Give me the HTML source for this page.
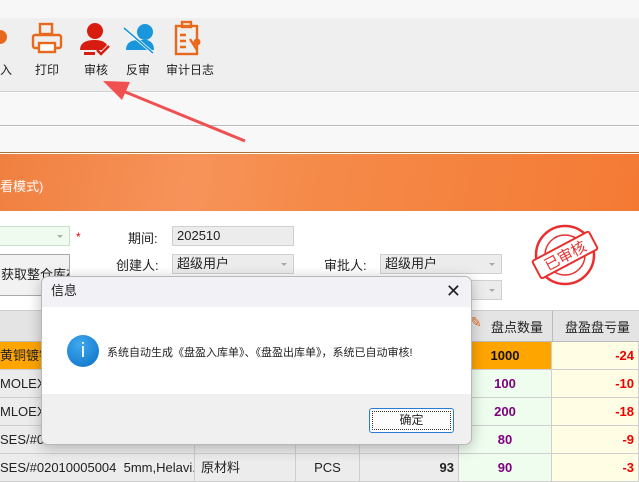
<!DOCTYPE html>
<html><head><meta charset="utf-8"><style>
*{margin:0;padding:0;box-sizing:border-box}
body{width:639px;height:478px;overflow:hidden;position:relative;background:#fff;font-family:"Liberation Sans","Noto Sans CJK SC",sans-serif;font-size:12px;color:#222}
.a{position:absolute}
.tb{left:0;top:18px;width:639px;height:74px;background:#efefef;border-bottom:1px solid #cfcfcf}
.lbl{font-size:12px;color:#222}
.cell{position:absolute;height:28px;line-height:28px;border-right:1px solid #cfcfcf;border-bottom:1px solid #cfcfcf;white-space:nowrap;overflow:hidden;font-size:13px}
.inp{position:absolute;height:20px;background:#ececec;border:1px solid #d0d0d0;line-height:18px;padding-left:4px;font-size:13px}
.arr{position:absolute;right:6px;top:8px;border:3px solid transparent;border-top-color:#aaa}
</style></head><body>
<div class="a" style="left:0;top:0;width:639px;height:18px;background:#f7f7f7"></div>
<div class="a tb"></div>
<svg class="a" style="left:0;top:20px" width="230" height="38">
<circle cx="0" cy="17" r="7" fill="#e8691c"/>
<g fill="none" stroke="#e8691c" stroke-width="2.4"><rect x="40" y="4" width="12" height="10"/><rect x="33" y="15" width="28" height="13" rx="2"/><rect x="39" y="23" width="16" height="9" fill="#fff"/></g>
<circle cx="95" cy="11" r="8" fill="#d71d10"/><path d="M80 30 q0-10 15-10 q9 0 12 5 l-5 5z" fill="#d71d10"/><rect x="84" y="32" width="11" height="3" fill="#d71d10"/><path d="M97 30l4 4 8-8" stroke="#d71d10" stroke-width="2.5" fill="none"/>
<circle cx="145" cy="12" r="8" fill="#1a96db"/><path d="M126 30q0-10 13-10h8q7 2 7 10z" fill="#1a96db"/><path d="M125 9l28 24" stroke="#fff" stroke-width="3"/><path d="M124 8l29 25" stroke="#1a96db" stroke-width="1.6"/>
<g fill="none" stroke="#e8691c" stroke-width="2.4"><rect x="176" y="6" width="21" height="28"/><rect x="182" y="2" width="9" height="5"/><path d="M180 15h6M180 21h6M180 27h6M190 19l7 11"/></g><circle cx="197" cy="22" r="3.5" fill="#e8691c"/>
</svg>
<div class="a lbl" style="left:-12px;top:61px">导入</div>
<div class="a lbl" style="left:35px;top:61px">打印</div>
<div class="a lbl" style="left:84px;top:61px">审核</div>
<div class="a lbl" style="left:126px;top:61px">反审</div>
<div class="a lbl" style="left:166px;top:61px">审计日志</div>
<div class="a" style="left:0;top:93px;width:639px;height:33px;background:#f8f8f8;border-bottom:1px solid #bbb"></div>
<div class="a" style="left:0;top:127px;width:639px;height:26px;background:#f8f8f8;border-bottom:1px solid #b07030"></div>
<div class="a" style="left:0;top:154px;width:639px;height:57px;background:linear-gradient(100deg,#f08040 0%,#f7935a 30%,#f58a48 50%,#f47a34 100%)"></div>
<div class="a" style="left:0;top:176px;color:#fff;font-size:13px">看模式)</div>
<svg class="a" style="left:100px;top:75px" width="150" height="70"><path d="M145 66L18 14" stroke="#f05050" stroke-width="3"/><path d="M3 6L30 7 22 25z" fill="#f05050"/></svg>
<div class="inp" style="left:-4px;top:226px;width:74px;background:#f0fbef;border-color:#c9dfc9"><span class="arr"></span></div>
<div class="a" style="left:76px;top:230px;color:#e00;font-size:12px">*</div>
<div class="a" style="left:128px;top:228px;font-size:13px">期间:</div>
<div class="inp" style="left:172px;top:226px;width:122px">202510</div>
<div class="a" style="left:-4px;top:254px;width:74px;height:42px;border:1px solid #aaa;background:#f2f2f2;font-size:13px;line-height:40px;padding-left:4px;white-space:nowrap;overflow:hidden">获取整仓库存</div>
<div class="a" style="left:116px;top:255px;font-size:13px">创建人:</div>
<div class="inp" style="left:172px;top:254px;width:122px">超级用户<span class="arr"></span></div>
<div class="a" style="left:324px;top:255px;font-size:13px">审批人:</div>
<div class="inp" style="left:380px;top:254px;width:122px">超级用户<span class="arr"></span></div>
<div class="inp" style="left:380px;top:280px;width:122px"><span class="arr"></span></div>
<svg class="a" style="left:525px;top:220px" width="80" height="70"><circle cx="40" cy="35" r="29" fill="none" stroke="#e83030" stroke-width="2.5"/><circle cx="40" cy="35" r="20" fill="none" stroke="#e83030" stroke-width="1.5"/><g transform="rotate(-28 40 35)"><rect x="8" y="25" width="64" height="20" rx="2" fill="#fff" stroke="#e83030" stroke-width="2"/><text x="40" y="41" text-anchor="middle" fill="#e83030" font-size="15" font-family="Noto Sans CJK SC">已审核</text></g></svg>
<div class="a" style="left:0;top:310px;width:639px;height:32px;background:#e4e4e4;border-top:1px solid #ccc;border-bottom:1px solid #bbb"></div>
<div class="a" style="left:470px;top:314px;color:#e8691c;font-size:14px">✎</div>
<div class="a" style="left:491px;top:317px;font-size:13px">盘点数量</div>
<div class="a" style="left:552px;top:311px;width:1px;height:30px;background:#bbb"></div>
<div class="a" style="left:565px;top:317px;font-size:13px">盘盈盘亏量</div>
<div id="g"></div>
<script>
var rows=[["黄铜镀锡","1000","-24",1],["MOLEX:0","100","-10"],["MLOEX:","200","-18"],["SES/#02","80","-9"],["SES/#02010005004&nbsp; 5mm,Helavi...","90","-3"]];
var h="";rows.forEach(function(r,i){var y=342+i*28;var o=r[3];
h+='<div class="cell" style="left:0;top:'+y+'px;width:195px;background:'+(o?'#ffa500':'#ececec')+'">'+r[0]+'</div>';
h+='<div class="cell" style="left:195px;top:'+y+'px;width:101px;background:#ececec;padding-left:6px">'+(i==4?'原材料':'')+'</div>';
h+='<div class="cell" style="left:296px;top:'+y+'px;width:64px;background:#ececec;text-align:center">'+(i==4?'PCS':'')+'</div>';
h+='<div class="cell" style="left:360px;top:'+y+'px;width:99px;background:'+(o?'#ffa500':'#ececec')+';text-align:right;padding-right:4px;font-weight:bold">'+(i==4?'93':'')+'</div>';
h+='<div class="cell" style="left:459px;top:'+y+'px;width:93px;background:'+(o?'#ffa500':'#effdef')+';text-align:center;font-weight:bold;color:'+(o?'#111':'#800080')+'">'+r[1]+'</div>';
h+='<div class="cell" style="left:552px;top:'+y+'px;width:87px;background:#fffde4;text-align:right;padding-right:4px;font-weight:bold;color:#e00">'+r[2]+'</div>';});
document.getElementById("g").innerHTML=h;
</script>
<div class="a" style="left:41px;top:276px;width:431px;height:169px;border:1px solid #b8b8b8;border-radius:7px;overflow:hidden;box-shadow:0 3px 14px rgba(0,0,0,.25);background:#f0f0f0">
<div style="height:30px;background:#f2f1f6;line-height:28px;padding-left:9px;font-size:13px">信息<span style="position:absolute;right:10px;top:0;font-size:18px;font-weight:300">✕</span></div>
<div style="height:87px;background:#fff;position:relative">
<div style="position:absolute;left:25px;top:28px;width:32px;height:32px;border-radius:50%;background:radial-gradient(circle at 40% 30%,#3fa9ef,#0a6fc4);color:#fff;text-align:center;line-height:32px;font-size:20px">i</div>
<div style="position:absolute;left:65px;top:37px;font-size:11px;white-space:nowrap">系统自动生成《盘盈入库单》、《盘盈出库单》，系统已自动审核!</div></div>
<div style="position:absolute;left:327px;top:131px;width:85px;height:25px;border:1px solid #2a7bd8;border-radius:3px;background:#fdfdfd;text-align:center;line-height:22px;font-size:12px"><div style="position:absolute;inset:2px;border:1px dotted #333"></div>确定</div>
</div>
</body></html>
